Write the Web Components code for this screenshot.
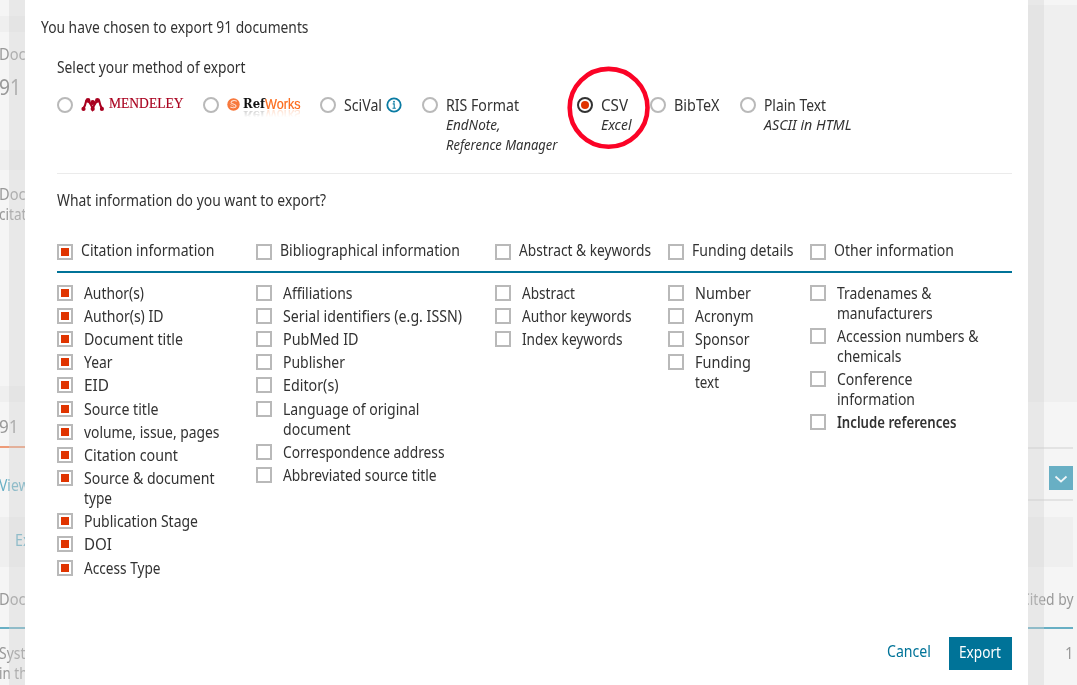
<!DOCTYPE html>
<html lang="en">
<head>
<meta charset="utf-8">
<title>Export documents</title>
<style>
html,body{margin:0;padding:0;height:100%;overflow:hidden;background:#f5f5f5}
body{font:15.5px/20px "Noto Sans","Open Sans",sans-serif;color:#323232}
</style>
</head>
<body>
<export-page></export-page>
<script>
const define = (name, markup, setup) => {
  const template = document.createElement('template');
  template.innerHTML = markup;
  customElements.define(name, class extends HTMLElement {
    constructor() {
      super();
      this.attachShadow({ mode: 'open' }).append(template.content.cloneNode(true));
    }
    connectedCallback() { if (setup) setup(this, this.shadowRoot); }
  });
};

/* One line of text condensed to a given width. */
define('fit-text', `
<style>
:host{display:block;white-space:nowrap;flex:none}
span{display:inline-block;transform-origin:0 50%}
</style><span><slot></slot></span>`, (el, root) => {
  const w = parseFloat(el.getAttribute('w'));
  const span = root.querySelector('span');
  span.style.transform = 'none';
  el.style.width = w + 'px';
  span.style.transform = 'scaleX(' + (w + .5) / span.getBoundingClientRect().width + ')';
});

define('check-box', `
<style>
:host{display:block;box-sizing:border-box;width:16px;height:16px;border:2px solid #b9b9b9;background:#fff;padding:2px;flex:none}
i{display:none;width:8px;height:8px;background:#e03400}
:host([checked]) i{display:block}
</style><i></i>`);

define('check-item', `
<style>
:host{display:flex;gap:11px;margin-bottom:3.2px}
check-box{margin-top:2px}
</style><check-box></check-box><div><slot></slot></div>`, (el, root) => {
  root.querySelector('check-box').toggleAttribute('checked', el.hasAttribute('checked'));
});

define('check-head', `
<style>
:host{display:flex;gap:7.5px}
check-box{margin-top:4px}
</style><check-box></check-box><slot></slot>`, (el, root) => {
  root.querySelector('check-box').toggleAttribute('checked', el.hasAttribute('checked'));
});

define('radio-option', `
<style>
:host{display:flex;gap:8px}
b{box-sizing:border-box;width:16px;height:16px;border:2px solid #b9b9b9;border-radius:50%;margin-top:2px;flex:none;padding:2px}
:host([checked]) b{border-color:#323232}
:host([checked]) b::after{content:"";display:block;width:8px;height:8px;border-radius:50%;background:#e03400}
.sub{font-size:13.5px;font-style:italic}
</style><b></b><div><slot></slot><div class="sub"><slot name="sub"></slot></div></div>`);

define('mendeley-logo', `
<style>
:host{display:flex;gap:4px;color:#a9001f;font:14px/20px "Liberation Serif",serif}
svg{display:block;margin-top:2px}
fit-text{-webkit-text-stroke:.15px #a9001f;margin-top:-1px}
</style>
<svg width="24" height="15" viewBox="0 0 24 15" fill="#a9001f">
<circle cx="2.5" cy="11.9" r="2.1"/><circle cx="11.7" cy="11.9" r="2.1"/><circle cx="20.9" cy="11.9" r="2.1"/>
<circle cx="7" cy="3.4" r="2.4"/><circle cx="16.4" cy="3.4" r="2.4"/><circle cx="11.7" cy="5.4" r="2.5"/>
<path d="M6 2.6C4 4.4 5.4 7.6 2.6 11M17.4 2.6C19.4 4.4 18 7.6 20.8 11M7.2 3.6C8.6 6 10.6 8 11.7 11.6C12.8 8 14.8 6 16.2 3.6" fill="none" stroke="#a9001f" stroke-width="2.1"/>
</svg><fit-text w="74">MENDELEY</fit-text>`);

define('refworks-logo', `
<style>
:host{display:flex;color:#111}
svg{display:block;margin:2.5px 3px 0 0}
.word{display:flex;height:17px;margin-top:-1px;-webkit-box-reflect:below -3px linear-gradient(transparent 45%,rgba(0,0,0,.28))}
.ref{font:bold 12.5px/20px "DejaVu Serif",serif}
.works{font:14px/20px "Liberation Sans",sans-serif;color:#fb6a1b;-webkit-text-stroke:.2px #fb6a1b}
</style>
<svg width="13" height="13" viewBox="0 0 13 13"><circle cx="6.5" cy="6.5" r="6.2" fill="#f7783c"/>
<path d="M9.8 3.4C7.8 2 4.4 2.4 4 4.3c-.3 1.8 5.4 1.8 5 4-.4 1.6-3.6 2-5.7.6" fill="none" stroke="#fff" stroke-opacity=".75" stroke-width="1.1"/><path d="M3 5.8c.8 1.8 4 1.6 4.2 3" fill="none" stroke="#fff" stroke-opacity=".5" stroke-width=".9"/></svg>
<div class="word"><fit-text class="ref" w="21.5">Ref</fit-text><fit-text class="works" w="35">Works</fit-text></div>`);

define('info-icon', `
<style>:host{display:block}svg{display:block}</style>
<svg width="16" height="16" viewBox="0 0 16 16"><circle cx="8" cy="8" r="6.7" fill="none" stroke="#0a7ba3" stroke-width="1.8"/><path d="M6.7 6.9h1.5v4.2M6.5 11.3h3.3" fill="none" stroke="#0a7ba3" stroke-width="1.1"/><circle cx="8" cy="4.8" r=".95" fill="#0a7ba3"/></svg>`);

define('method-list', `
<style>
:host{display:grid;grid-template-columns:146px 117px 102px 155px 73px 90px 1fr;height:78px;position:relative}
.sci{display:flex;gap:4px}
info-icon{margin-top:2px}
.ring{position:absolute;left:510px;top:-29px;width:84px;height:84px}
</style>
<radio-option><mendeley-logo></mendeley-logo></radio-option>
<radio-option><refworks-logo></refworks-logo></radio-option>
<radio-option><div class="sci"><fit-text w="37.5">SciVal</fit-text><info-icon></info-icon></div></radio-option>
<radio-option><fit-text w="72.5">RIS Format</fit-text><fit-text slot="sub" w="54">EndNote,</fit-text><fit-text slot="sub" w="111">Reference Manager</fit-text></radio-option>
<radio-option checked><fit-text w="26.5">CSV</fit-text><fit-text slot="sub" w="30">Excel</fit-text></radio-option>
<radio-option><fit-text w="45">BibTeX</fit-text></radio-option>
<radio-option><fit-text w="61.5">Plain Text</fit-text><fit-text slot="sub" w="87">ASCII in HTML</fit-text></radio-option>
<svg class="ring" viewBox="0 0 84 84"><circle cx="41.6" cy="41.8" r="38.9" fill="none" stroke="#fb0326" stroke-width="4.6"/></svg>`);

define('field-table', `
<style>
.row{display:grid;grid-template-columns:199px 239px 173px 142px 1fr}
.head{height:31px;border-bottom:2px solid #007398;margin-bottom:9.6px}
</style>
<div class="row head">
<check-head checked><fit-text w="133">Citation information</fit-text></check-head>
<check-head><fit-text w="179.5">Bibliographical information</fit-text></check-head>
<check-head><fit-text w="131.5">Abstract &amp; keywords</fit-text></check-head>
<check-head><fit-text w="101">Funding details</fit-text></check-head>
<check-head><fit-text w="119.5">Other information</fit-text></check-head>
</div>
<div class="row">
<div>
<check-item checked><fit-text w="59.5">Author(s)</fit-text></check-item>
<check-item checked><fit-text w="79">Author(s) ID</fit-text></check-item>
<check-item checked><fit-text w="98.5">Document title</fit-text></check-item>
<check-item checked><fit-text w="28">Year</fit-text></check-item>
<check-item checked><fit-text w="24.5">EID</fit-text></check-item>
<check-item checked><fit-text w="74">Source title</fit-text></check-item>
<check-item checked><fit-text w="135">volume, issue, pages</fit-text></check-item>
<check-item checked><fit-text w="93.5">Citation count</fit-text></check-item>
<check-item checked><fit-text w="130">Source &amp; document</fit-text><fit-text w="27.5">type</fit-text></check-item>
<check-item checked><fit-text w="113.5">Publication Stage</fit-text></check-item>
<check-item checked><fit-text w="27.5">DOI</fit-text></check-item>
<check-item checked><fit-text w="76">Access Type</fit-text></check-item>
</div>
<div>
<check-item><fit-text w="69">Affiliations</fit-text></check-item>
<check-item><fit-text w="178.5">Serial identifiers (e.g. ISSN)</fit-text></check-item>
<check-item><fit-text w="75">PubMed ID</fit-text></check-item>
<check-item><fit-text w="61.5">Publisher</fit-text></check-item>
<check-item><fit-text w="55">Editor(s)</fit-text></check-item>
<check-item><fit-text w="136">Language of original</fit-text><fit-text w="67">document</fit-text></check-item>
<check-item><fit-text w="161">Correspondence address</fit-text></check-item>
<check-item><fit-text w="153">Abbreviated source title</fit-text></check-item>
</div>
<div>
<check-item><fit-text w="52.5">Abstract</fit-text></check-item>
<check-item><fit-text w="109">Author keywords</fit-text></check-item>
<check-item><fit-text w="100">Index keywords</fit-text></check-item>
</div>
<div>
<check-item><fit-text w="55.5">Number</fit-text></check-item>
<check-item><fit-text w="58">Acronym</fit-text></check-item>
<check-item><fit-text w="54">Sponsor</fit-text></check-item>
<check-item><fit-text w="55.5">Funding</fit-text><fit-text w="23.5">text</fit-text></check-item>
</div>
<div>
<check-item><fit-text w="94">Tradenames &amp;</fit-text><fit-text w="95">manufacturers</fit-text></check-item>
<check-item><fit-text w="141">Accession numbers &amp;</fit-text><fit-text w="64">chemicals</fit-text></check-item>
<check-item><fit-text w="75">Conference</fit-text><fit-text w="77.5">information</fit-text></check-item>
<check-item><fit-text w="119" style="font-weight:650">Include references</fit-text></check-item>
</div>
</div>`);

define('export-dialog', `
<style>
:host{display:flex;flex-direction:column;box-sizing:border-box;width:1035px;height:100%;border:solid rgba(210,210,210,.38);border-width:0 16px;background:#fff;background-clip:padding-box;padding:17px 16px 15px}
.body{margin:20px 0 0 16px;display:flex;flex-direction:column}
method-list{margin-top:18px}
hr{width:100%;border:0;height:1px;background:#ebebeb;margin:0 0 16px}
field-table{margin-top:30px}
footer{margin-top:auto;display:flex;justify-content:flex-end;gap:19px}
.cancel{color:#007398;margin-top:4px}
button{border:0;background:#007398;color:#fff;font:inherit;width:63px;height:33px;padding:5px 0 0 10px;display:flex;align-items:flex-start}
</style>
<fit-text w="267">You have chosen to export 91 documents</fit-text>
<div class="body">
<fit-text w="188">Select your method of export</fit-text>
<method-list></method-list>
<hr>
<fit-text w="268.5">What information do you want to export?</fit-text>
<field-table></field-table>
</div>
<footer><fit-text class="cancel" w="43.5">Cancel</fit-text><button><fit-text w="41.5">Export</fit-text></button></footer>`);

/* Dimmed results page; its inner part lies beneath the dialog. */
define('results-page', `
<style>
:host{display:flex;justify-content:space-between;height:100%;color:#999}
section{width:49px;box-sizing:border-box}
section>div{box-sizing:border-box}
.left{width:60px}
.left fit-text{margin-left:-1px}
.right>div:not(.full){margin-right:4px}
.band{background:#efefef}
.line{height:2px;background:#e3e3e3}
.orange{height:2px;background:#ee9b78}
.teal{height:2px;background:#68afc4}
.link{color:#68afc4}
.end{display:flex;justify-content:flex-end}
svg{display:block;margin-left:auto;background:#68afc4}
</style>
<section class="left">
<div style="height:16px"></div>
<div class="band" style="height:16px"></div>
<div style="height:118px;padding-top:12px"><fit-text w="26">Doc</fit-text><fit-text w="21.5" style="font-size:21px;line-height:28px;margin-top:9px">91</fit-text></div>
<div class="band" style="height:20px"></div>
<div style="height:216px;padding-top:14px"><fit-text w="26">Doc</fit-text><fit-text w="27">citat</fit-text></div>
<div class="band" style="height:16px"></div>
<div style="height:44px;padding-top:12px"><fit-text w="19" style="font-size:18px;line-height:24px">91</fit-text></div>
<div class="orange"></div>
<div class="link" style="height:69px;padding-top:27px"><fit-text w="30">View</fit-text></div>
<div class="band link" style="height:50px;padding:13px 0 0 16px"><fit-text w="15">Ex</fit-text></div>
<div style="height:60px;padding-top:22px"><fit-text w="26">Doc</fit-text></div>
<div class="teal"></div>
<div style="height:56px;padding-top:14px"><fit-text w="26">Syst</fit-text><fit-text w="28">in th</fit-text></div>
</section>
<section class="right">
<div style="height:5px"></div>
<div class="band full" style="height:397px"></div>
<div style="height:45px"></div>
<div class="line"></div>
<div style="height:50px;padding-top:17px"><svg width="24" height="24" viewBox="0 0 24 24"><path d="M6.5 10.5l5.5 5 5.5-5" fill="none" stroke="#f0f6f8" stroke-width="1.7"/></svg></div>
<div class="line"></div>
<div style="height:16px"></div>
<div class="band" style="height:50px"></div>
<div class="end" style="height:60px;padding-top:22px"><fit-text w="52">Cited by</fit-text></div>
<div class="teal"></div>
<div class="end" style="height:56px;padding-top:14px"><fit-text w="8">1</fit-text></div>
</section>`);

define('export-page', `
<style>
:host{display:block;position:relative;width:1077px;height:685px;overflow:hidden}
export-dialog{position:absolute;left:9px;top:0}
</style>
<results-page></results-page>
<export-dialog></export-dialog>`);
</script>
</body>
</html>
